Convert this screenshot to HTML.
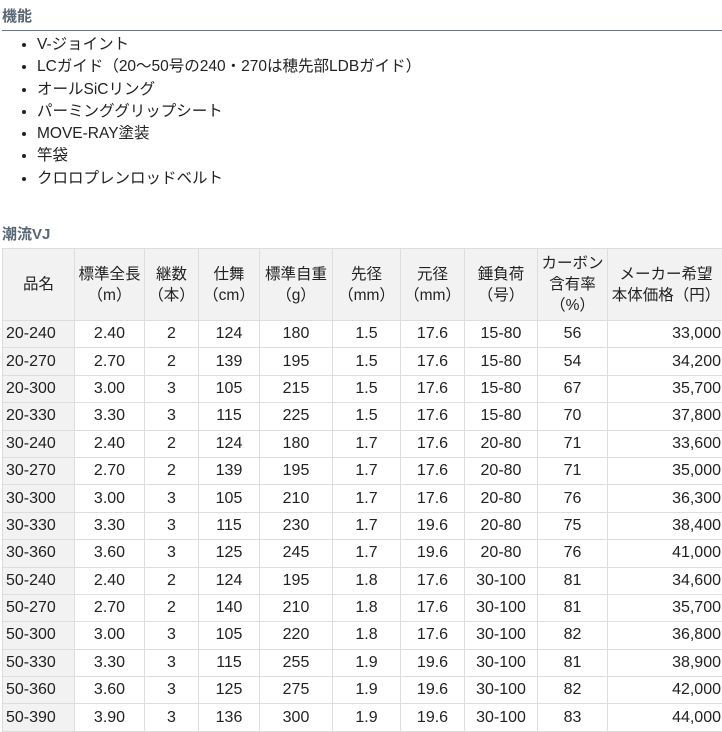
<!DOCTYPE html>
<html><head><meta charset="utf-8"><style>
*{margin:0;padding:0;box-sizing:border-box}
body{width:722px;height:726px;overflow:hidden;background:#fff;font-family:"Liberation Sans","Noto Sans CJK JP",sans-serif;color:#222;font-size:15.5px}
h3{position:absolute;left:2px;font-size:15px;color:#5b6675;font-weight:bold}
#h1{top:5px}
#line{position:absolute;left:2px;top:30px;width:720px;height:1px;background:#6b7585}
ul{position:absolute;top:34px;left:37px;list-style:disc;line-height:22.3px}
#h2{top:223px}
table{position:absolute;top:248px;left:2px;border-collapse:collapse;table-layout:fixed;width:722px}
td,th{border:1px solid #ddd;text-align:center;font-weight:normal;height:27.4px;padding:0;white-space:nowrap;font-size:16px}
th{background:#f2f2f2;height:72px;line-height:21px;font-size:15.5px}
td:first-child{background:#f2f2f2;text-align:left;padding-left:3px}
td:last-child{text-align:right;padding-right:3px}
</style></head><body>
<h3 id="h1">機能</h3><div id="line"></div>
<ul><li>V-ジョイント</li><li>LCガイド（20～50号の240・270は穂先部LDBガイド）</li><li>オールSiCリング</li><li>パーミンググリップシート</li><li>MOVE-RAY塗装</li><li>竿袋</li><li>クロロプレンロッドベルト</li></ul>
<h3 id="h2">潮流VJ</h3>
<table>
<colgroup><col style="width:72px"><col style="width:70px"><col style="width:54px"><col style="width:61px"><col style="width:73px"><col style="width:68px"><col style="width:64px"><col style="width:73px"><col style="width:70px"><col style="width:117px"></colgroup>
<tr><th>品名</th><th>標準全長<br>（m）</th><th>継数<br>（本）</th><th>仕舞<br>（cm）</th><th>標準自重<br>（g）</th><th>先径<br>（mm）</th><th>元径<br>（mm）</th><th>錘負荷<br>（号）</th><th>カーボン<br>含有率<br>（%）</th><th>メーカー希望<br>本体価格（円）</th></tr>
<tr><td>20-240</td><td>2.40</td><td>2</td><td>124</td><td>180</td><td>1.5</td><td>17.6</td><td>15-80</td><td>56</td><td>33,000</td></tr>
<tr><td>20-270</td><td>2.70</td><td>2</td><td>139</td><td>195</td><td>1.5</td><td>17.6</td><td>15-80</td><td>54</td><td>34,200</td></tr>
<tr><td>20-300</td><td>3.00</td><td>3</td><td>105</td><td>215</td><td>1.5</td><td>17.6</td><td>15-80</td><td>67</td><td>35,700</td></tr>
<tr><td>20-330</td><td>3.30</td><td>3</td><td>115</td><td>225</td><td>1.5</td><td>17.6</td><td>15-80</td><td>70</td><td>37,800</td></tr>
<tr><td>30-240</td><td>2.40</td><td>2</td><td>124</td><td>180</td><td>1.7</td><td>17.6</td><td>20-80</td><td>71</td><td>33,600</td></tr>
<tr><td>30-270</td><td>2.70</td><td>2</td><td>139</td><td>195</td><td>1.7</td><td>17.6</td><td>20-80</td><td>71</td><td>35,000</td></tr>
<tr><td>30-300</td><td>3.00</td><td>3</td><td>105</td><td>210</td><td>1.7</td><td>17.6</td><td>20-80</td><td>76</td><td>36,300</td></tr>
<tr><td>30-330</td><td>3.30</td><td>3</td><td>115</td><td>230</td><td>1.7</td><td>19.6</td><td>20-80</td><td>75</td><td>38,400</td></tr>
<tr><td>30-360</td><td>3.60</td><td>3</td><td>125</td><td>245</td><td>1.7</td><td>19.6</td><td>20-80</td><td>76</td><td>41,000</td></tr>
<tr><td>50-240</td><td>2.40</td><td>2</td><td>124</td><td>195</td><td>1.8</td><td>17.6</td><td>30-100</td><td>81</td><td>34,600</td></tr>
<tr><td>50-270</td><td>2.70</td><td>2</td><td>140</td><td>210</td><td>1.8</td><td>17.6</td><td>30-100</td><td>81</td><td>35,700</td></tr>
<tr><td>50-300</td><td>3.00</td><td>3</td><td>105</td><td>220</td><td>1.8</td><td>17.6</td><td>30-100</td><td>82</td><td>36,800</td></tr>
<tr><td>50-330</td><td>3.30</td><td>3</td><td>115</td><td>255</td><td>1.9</td><td>19.6</td><td>30-100</td><td>81</td><td>38,900</td></tr>
<tr><td>50-360</td><td>3.60</td><td>3</td><td>125</td><td>275</td><td>1.9</td><td>19.6</td><td>30-100</td><td>82</td><td>42,000</td></tr>
<tr><td>50-390</td><td>3.90</td><td>3</td><td>136</td><td>300</td><td>1.9</td><td>19.6</td><td>30-100</td><td>83</td><td>44,000</td></tr>
</table>
</body></html>
